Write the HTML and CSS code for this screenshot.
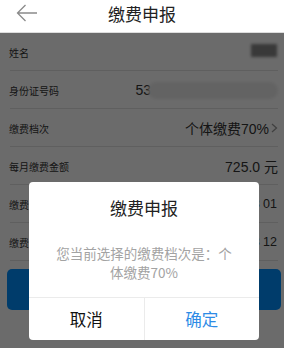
FILE: index.html
```html
<!DOCTYPE html>
<html lang="zh">
<head>
<meta charset="utf-8">
<link rel="stylesheet" href="styles.css">
</head>
<body>
<div class="page">
  <header class="topbar">
    <svg class="back" width="22" height="18" viewBox="0 0 22 18"><path d="M21 9H1.5M9.5 1L1.5 9l8 8" fill="none" stroke="#8a8a8a" stroke-width="1.3"/></svg>
    <h1 class="title">缴费申报</h1>
  </header>
  <main class="form">
    <div class="row"><span class="label">姓名</span><span class="value"><span class="blur blur-name"></span></span></div>
    <div class="row"><span class="label">身份证号码</span><span class="value id">53<span class="blur blur-id"></span></span></div>
    <div class="row"><span class="label">缴费档次</span><span class="value">个体缴费70%<svg class="chev" width="7" height="10" viewBox="0 0 7 10"><path d="M1 1l4.5 4L1 9" fill="none" stroke="#999" stroke-width="1.3"/></svg></span></div>
    <div class="row"><span class="label">每月缴费金额</span><span class="value">725.0 元</span></div>
    <div class="row"><span class="label">缴费开始年月</span><span class="value small">2018 01</span></div>
    <div class="row"><span class="label">缴费截止年月</span><span class="value small">2018 12</span></div>
    <div class="submit"></div>
  </main>
  <div class="mask"></div>
  <div class="dialog">
    <div class="d-title">缴费申报</div>
    <div class="d-msg">您当前选择的缴费档次是：个体缴费70%</div>
    <div class="d-foot">
      <span class="d-btn cancel">取消</span>
      <span class="d-btn ok">确定</span>
    </div>
  </div>
</div>
</body>
</html>
```
FILE: styles.css
```css
* { box-sizing: border-box; }
html, body { margin: 0; padding: 0; }
body {
  width: 284px;
  height: 348px;
  overflow: hidden;
  font-family: "Liberation Sans", "Noto Sans CJK SC", sans-serif;
  background: #fff;
}
.page { position: relative; width: 284px; height: 348px; }
.topbar {
  height: 33px;
  display: flex;
  align-items: flex-start;
  justify-content: center;
  position: relative;
  border-bottom: 1px solid #ddd;
}
.back { position: absolute; left: 16px; top: 4px; }
.title {
  margin: 3px 0 0;
  font-size: 17px;
  line-height: 22px;
  font-weight: normal;
  color: #222;
  font-family: "Noto Sans CJK SC", sans-serif;
}
.form { display: flex; flex-direction: column; }
.row {
  height: 38px;
  display: flex;
  align-items: center;
  justify-content: space-between;
  padding: 0 6px 0 9px;
  position: relative;
}
.row::after {
  content: "";
  position: absolute;
  left: 10px; right: 6px; bottom: 0;
  height: 1px;
  background: #e3e3e3;
}
.label { font-size: 10px; color: #333; font-family: "Noto Sans CJK SC", sans-serif; }
.value { font-size: 14px; color: #333; display: flex; align-items: center; }
.value.small { font-size: 12.5px; margin-right: 1px; white-space: pre; }
.chev { margin-left: 2px; }
.blur { display: inline-block; filter: blur(1.5px); }
.blur-name { width: 26px; height: 13px; background: #888; margin-right: 1px; margin-top: -4px; }
.blur-id { width: 130px; height: 17px; background: #ececec; border-radius: 9px; margin-left: -3px; }
.submit {
  margin: 8px 3px 0 7px;
  height: 41px;
  border-radius: 5px;
  background: #0090ff;
}
.mask {
  position: absolute;
  left: 0; right: 0; top: 33px; bottom: 0;
  background: rgba(0, 0, 0, 0.58);
}
.dialog {
  position: absolute;
  left: 29px; top: 182px;
  width: 230px; height: 158px;
  background: #fff;
  border-radius: 4px;
  display: flex;
  flex-direction: column;
  font-family: "Noto Sans CJK SC", sans-serif;
}
.d-title {
  margin-top: 14px;
  text-align: center;
  font-size: 17px;
  line-height: 24px;
  color: #222;
}
.d-msg {
  margin-top: 24px;
  padding: 0 27px;
  text-align: center;
  font-size: 13.5px;
  line-height: 19px;
  color: #a3a3a3;
}
.d-foot {
  margin-top: auto;
  height: 43px;
  border-top: 1px solid #ebebeb;
  display: flex;
}
.d-btn {
  flex: 1;
  display: flex;
  align-items: center;
  justify-content: center;
  font-size: 16.5px;
}
.cancel { color: #111; border-right: 1px solid #ebebeb; }
.ok { color: #2d8be6; }
```
